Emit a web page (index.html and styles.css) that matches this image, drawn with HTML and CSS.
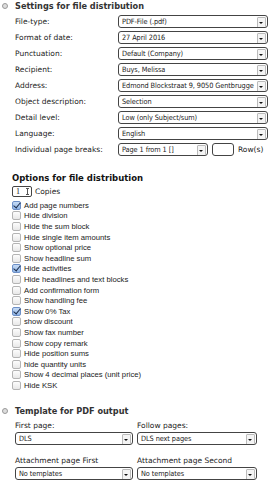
FILE: index.html
```html
<!DOCTYPE html>
<html lang="en">
<head>
    <meta charset="UTF-8">
    <meta name="viewport" content="width=device-width, initial-scale=1.0">
    <title>File distribution</title>
    <link rel="stylesheet" href="styles.css">
</head>
<body>
    <div class="sec-title"><span class="bullet"></span>Settings for file distribution</div>
    <div class="form">
        <div class="row"><label>File-type:</label><div class="select">PDF-File (.pdf)<span class="arrow"></span></div></div>
        <div class="row"><label>Format of date:</label><div class="select">27 April 2016<span class="arrow"></span></div></div>
        <div class="row"><label>Punctuation:</label><div class="select">Default (Company)<span class="arrow"></span></div></div>
        <div class="row"><label>Recipient:</label><div class="select">Buys, Melissa<span class="arrow"></span></div></div>
        <div class="row"><label>Address:</label><div class="select">Edmond Blockstraat 9, 9050 Gentbrugge<span class="arrow"></span></div></div>
        <div class="row"><label>Object description:</label><div class="select">Selection<span class="arrow"></span></div></div>
        <div class="row"><label>Detail level:</label><div class="select">Low (only Subject/sum)<span class="arrow"></span></div></div>
        <div class="row"><label>Language:</label><div class="select">English<span class="arrow"></span></div></div>
        <div class="row"><label>Individual page breaks:</label><div class="select short">Page 1 from 1 []<span class="arrow"></span></div><span class="textbox"></span><span class="rows">Row(s)</span></div>
    </div>

    <div class="opt-title">Options for file distribution</div>
    <div class="copies"><span class="number">1<span class="spin"></span></span>Copies</div>
    <ul class="checks">
        <li class="on"><span class="cb"></span>Add page numbers</li>
        <li><span class="cb"></span>Hide division</li>
        <li><span class="cb"></span>Hide the sum block</li>
        <li><span class="cb"></span>Hide single item amounts</li>
        <li><span class="cb"></span>Show optional price</li>
        <li><span class="cb"></span>Show headline sum</li>
        <li class="on"><span class="cb"></span>Hide activities</li>
        <li><span class="cb"></span>Hide headlines and text blocks</li>
        <li><span class="cb"></span>Add confirmation form</li>
        <li><span class="cb"></span>Show handling fee</li>
        <li class="on"><span class="cb"></span>Show 0% Tax</li>
        <li><span class="cb"></span>show discount</li>
        <li><span class="cb"></span>Show fax number</li>
        <li><span class="cb"></span>Show copy remark</li>
        <li><span class="cb"></span>Hide position sums</li>
        <li><span class="cb"></span>hide quantity units</li>
        <li><span class="cb"></span>Show 4 decimal places (unit price)</li>
        <li><span class="cb"></span>Hide KSK</li>
    </ul>

    <div class="sec-title tpl"><span class="bullet"></span>Template for PDF output</div>
    <div class="tpl-grid">
        <div class="field"><label>First page:</label><div class="select">DLS<span class="arrow"></span></div></div>
        <div class="field"><label>Follow pages:</label><div class="select">DLS next pages<span class="arrow"></span></div></div>
        <div class="field"><label>Attachment page First</label><div class="select">No templates<span class="arrow"></span></div></div>
        <div class="field"><label>Attachment page Second</label><div class="select">No templates<span class="arrow"></span></div></div>
    </div>
</body>
</html>
```

FILE: styles.css
```css
body {
    margin: 0;
    width: 272px;
    height: 480px;
    overflow: hidden;
    background-color: #fff;
    color: #222;
    font-family: 'DejaVu Sans', Verdana, sans-serif;
    font-size: 7.5px;
}

.sec-title {
    display: flex;
    align-items: center;
    height: 11px;
    padding-left: 2px;
    font-weight: bold;
    font-size: 8.2px;
    color: #333;
}

.sec-title.tpl {
    margin-top: 15px;
}

.bullet {
    width: 4px;
    height: 4px;
    margin-right: 7px;
    border: 1px solid #999;
    border-radius: 50%;
    background-color: #ddd;
}

.form {
    padding: 2px 0 0 15px;
}

.row {
    display: flex;
    align-items: center;
    height: 16px;
}

.row label {
    width: 103px;
    flex: none;
}

.select {
    position: relative;
    box-sizing: border-box;
    display: flex;
    align-items: center;
    width: 150px;
    height: 13px;
    padding-left: 3px;
    border: 1px solid #444;
    border-radius: 3px;
    background-color: #fff;
    font-family: 'DejaVu Sans Condensed', 'DejaVu Sans', sans-serif;
    font-size: 7.3px;
    letter-spacing: -0.08px;
    white-space: nowrap;
    overflow: hidden;
}

.select.short {
    width: 90px;
}

.arrow {
    position: absolute;
    right: 1px;
    top: 1px;
    width: 7px;
    height: 9px;
    border: 1px solid #bbb;
    border-radius: 1px;
    background-color: #f4f4f4;
}

.arrow::after {
    content: "";
    position: absolute;
    left: 1px;
    top: 4px;
    border-left: 2.5px solid transparent;
    border-right: 2.5px solid transparent;
    border-top: 2.5px solid #111;
}

.textbox {
    box-sizing: border-box;
    width: 22px;
    height: 13px;
    margin-left: 4px;
    border: 1px solid #444;
    border-radius: 3px;
}

.rows {
    margin-left: 4px;
}

.opt-title {
    margin-top: 15px;
    padding-left: 12px;
    height: 12px;
    line-height: 12px;
    font-weight: bold;
    font-size: 8.5px;
    color: #111;
}

.copies {
    display: flex;
    align-items: center;
    height: 12px;
    margin-top: 1px;
    padding-left: 12px;
}

.number {
    position: relative;
    box-sizing: border-box;
    width: 20px;
    height: 11px;
    margin-right: 3px;
    padding-left: 3px;
    border: 1px solid #444;
    border-radius: 2px;
    font-family: 'Liberation Serif', serif;
    font-size: 8px;
    line-height: 9px;
}

.spin {
    position: absolute;
    right: 3px;
    top: 1px;
    width: 1px;
    height: 7px;
    background-color: #555;
}

.spin::before,
.spin::after {
    content: "";
    position: absolute;
    left: -1px;
    width: 3px;
    height: 1px;
    background-color: #555;
}

.spin::before {
    top: 0;
}

.spin::after {
    bottom: 0;
}

.checks {
    list-style: none;
    margin: 3px 0 0 0;
    padding: 0 0 0 12px;
    font-family: 'Liberation Sans', Arial, sans-serif;
    font-size: 7.7px;
}

.checks li {
    display: flex;
    align-items: center;
    height: 10.6px;
}

.cb {
    position: relative;
    box-sizing: border-box;
    width: 9px;
    height: 9px;
    margin-right: 3px;
    border: 1px solid #b4b4b4;
    border-radius: 2px;
    background: linear-gradient(#fdfdfd, #e8e8e8);
}

.on .cb {
    border-color: #6c8fc7;
    background: linear-gradient(#c6dbf5, #8fb5e6);
}

.on .cb::after {
    content: "";
    position: absolute;
    left: 2px;
    top: -1px;
    width: 3px;
    height: 6px;
    border-right: 1.5px solid #1c2c4a;
    border-bottom: 1.5px solid #1c2c4a;
    transform: rotate(40deg);
}

.tpl-grid {
    display: grid;
    grid-template-columns: 118px 120px;
    column-gap: 4px;
    row-gap: 10px;
    padding: 3px 0 0 15px;
}

.field label {
    display: block;
    height: 11px;
    line-height: 11px;
    margin-bottom: 1px;
}

.field .select {
    width: 100%;
}
```
